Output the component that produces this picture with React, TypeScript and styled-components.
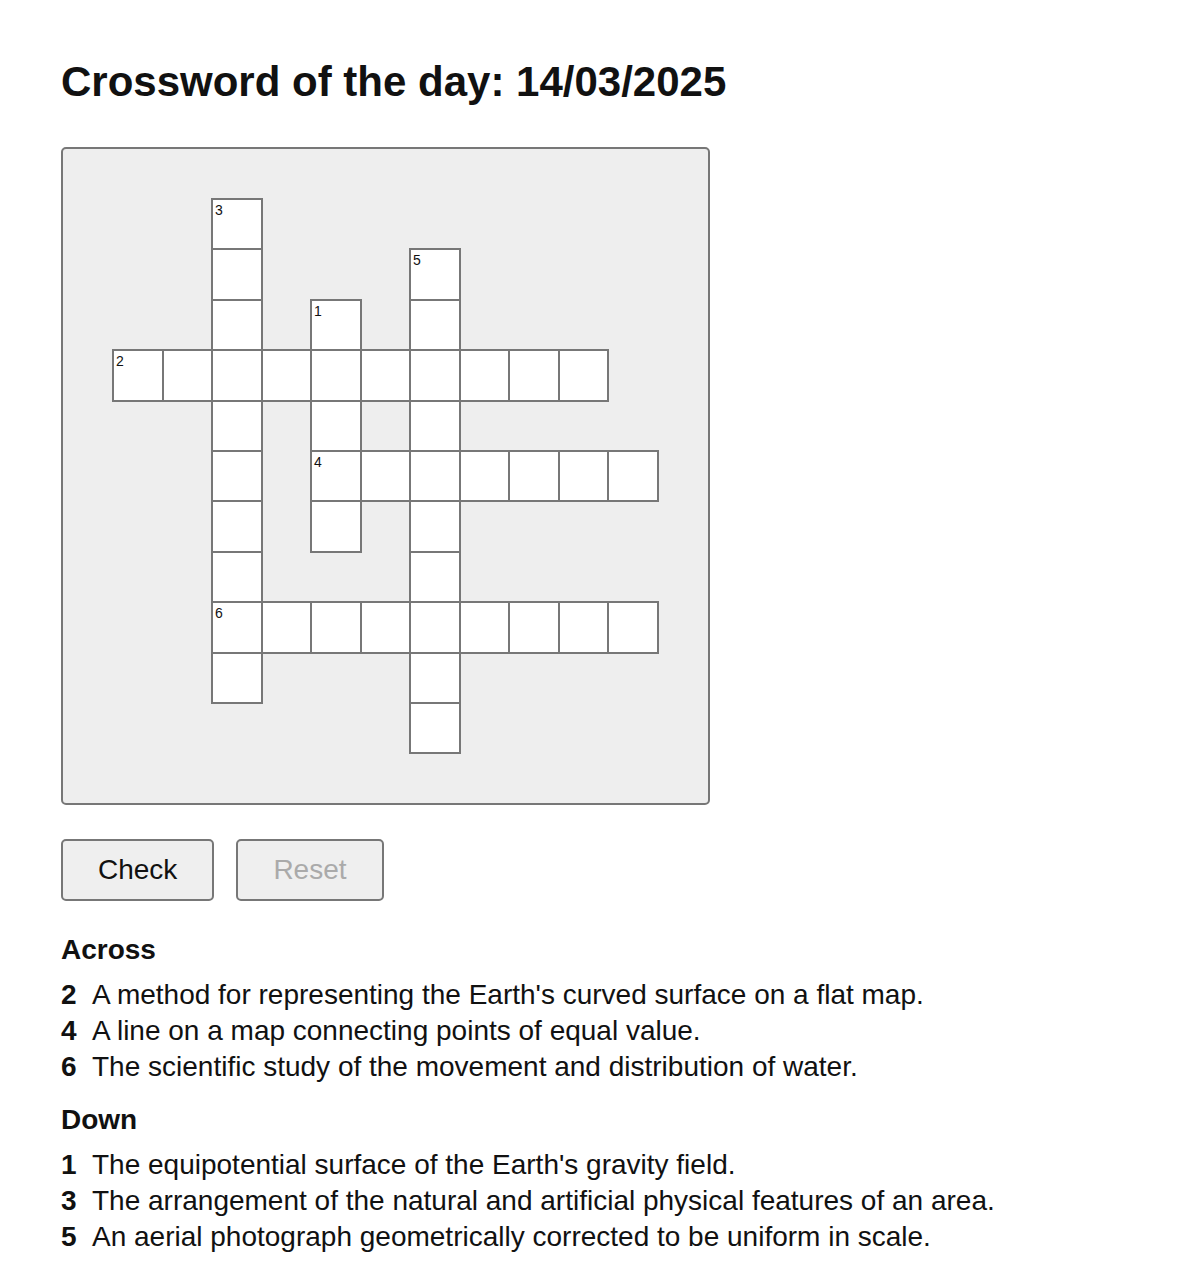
import React, { useState } from "react";
import styled, { createGlobalStyle } from "styled-components";

const GlobalStyle = createGlobalStyle`
  html, body {
    margin: 0;
    padding: 0;
    background: #ffffff;
  }
  body {
    font-family: "Liberation Sans", Arial, Helvetica, sans-serif;
    color: #111111;
  }
  * {
    box-sizing: border-box;
  }
`;

type Direction = "across" | "down";

interface Entry {
  num: number;
  dir: Direction;
  row: number;
  col: number;
  length: number;
  clue: string;
}

const ENTRIES: Entry[] = [
  { num: 2, dir: "across", row: 3, col: 0, length: 10, clue: "A method for representing the Earth's curved surface on a flat map." },
  { num: 4, dir: "across", row: 5, col: 4, length: 7, clue: "A line on a map connecting points of equal value." },
  { num: 6, dir: "across", row: 8, col: 2, length: 9, clue: "The scientific study of the movement and distribution of water." },
  { num: 1, dir: "down", row: 2, col: 4, length: 5, clue: "The equipotential surface of the Earth's gravity field." },
  { num: 3, dir: "down", row: 0, col: 2, length: 10, clue: "The arrangement of the natural and artificial physical features of an area." },
  { num: 5, dir: "down", row: 1, col: 6, length: 10, clue: "An aerial photograph geometrically corrected to be uniform in scale." },
];

const SIZE = 11;

interface CellInfo {
  row: number;
  col: number;
  num?: number;
}

function buildCells(): CellInfo[] {
  const map = new Map<string, CellInfo>();
  for (const e of ENTRIES) {
    for (let i = 0; i < e.length; i++) {
      const row = e.dir === "down" ? e.row + i : e.row;
      const col = e.dir === "across" ? e.col + i : e.col;
      const key = `${row}-${col}`;
      if (!map.has(key)) map.set(key, { row, col });
    }
    const start = map.get(`${e.row}-${e.col}`)!;
    start.num = e.num;
  }
  return Array.from(map.values()).sort((a, b) => a.row - b.row || a.col - b.col);
}

const CELLS = buildCells();

const Page = styled.main`
  display: flex;
  flex-direction: column;
  align-items: flex-start;
  padding: 57px 0 24px 61px;
`;

const Title = styled.h1`
  margin: 0;
  font-size: 42px;
  line-height: 50px;
  font-weight: 700;
  color: #111111;
`;

const Board = styled.div`
  margin-top: 40px;
  padding: 50px;
  background: #eeeeee;
  border: 2px solid #777777;
  border-radius: 5px;
`;

const Grid = styled.div`
  display: grid;
  grid-template-columns: repeat(${SIZE}, 49.5px);
  grid-template-rows: repeat(${SIZE}, 50.4px);
`;

const Cell = styled.div<{ $row: number; $col: number }>`
  grid-row: ${(p) => p.$row + 1};
  grid-column: ${(p) => p.$col + 1};
  position: relative;
  background: #ffffff;
  border: 1px solid #777777;
  outline: 1px solid #777777;
`;

const CellNumber = styled.span`
  position: absolute;
  top: 3px;
  left: 2px;
  font-size: 14px;
  line-height: 14px;
  color: #111111;
  pointer-events: none;
`;

const CellInput = styled.input`
  width: 100%;
  height: 100%;
  border: none;
  background: transparent;
  padding: 0;
  text-align: center;
  text-transform: uppercase;
  font-family: inherit;
  font-size: 24px;
  color: #111111;
  outline: none;
`;

const Actions = styled.div`
  display: flex;
  gap: 22px;
  margin-top: 34px;
`;

const Button = styled.button`
  height: 62px;
  padding: 0 35px;
  font-family: inherit;
  font-size: 28px;
  color: #111111;
  background: #efefef;
  border: 2px solid #777777;
  border-radius: 5px;
  cursor: pointer;

  &:disabled {
    color: #aaaaaa;
    cursor: default;
  }
`;

const Clues = styled.section`
  display: flex;
  flex-direction: column;
  gap: 17px;
  margin-top: 31px;
`;

const ClueGroup = styled.div`
  display: flex;
  flex-direction: column;
  gap: 9px;
`;

const ClueHeading = styled.h2`
  margin: 0;
  font-size: 28px;
  line-height: 36px;
  font-weight: 700;
`;

const ClueList = styled.ol`
  margin: 0;
  padding: 0;
  list-style: none;
`;

const ClueItem = styled.li`
  display: grid;
  grid-template-columns: 31px 1fr;
  font-size: 28px;
  line-height: 36px;
`;

const ClueNumber = styled.span`
  font-weight: 700;
`;

export default function App() {
  const [values, setValues] = useState<Record<string, string>>({});
  const hasInput = Object.values(values).some((v) => v);

  const across = ENTRIES.filter((e) => e.dir === "across").sort((a, b) => a.num - b.num);
  const down = ENTRIES.filter((e) => e.dir === "down").sort((a, b) => a.num - b.num);

  return (
    <>
      <GlobalStyle />
      <Page>
        <Title>Crossword of the day: 14/03/2025</Title>
        <Board>
          <Grid>
            {CELLS.map((c) => {
              const key = `${c.row}-${c.col}`;
              return (
                <Cell key={key} $row={c.row} $col={c.col}>
                  {c.num !== undefined && <CellNumber>{c.num}</CellNumber>}
                  <CellInput
                    maxLength={1}
                    value={values[key] ?? ""}
                    onChange={(ev) => setValues((prev) => ({ ...prev, [key]: ev.target.value }))}
                    aria-label={`Row ${c.row + 1}, column ${c.col + 1}`}
                  />
                </Cell>
              );
            })}
          </Grid>
        </Board>
        <Actions>
          <Button type="button">Check</Button>
          <Button type="button" disabled={!hasInput} onClick={() => setValues({})}>
            Reset
          </Button>
        </Actions>
        <Clues>
          <ClueGroup>
            <ClueHeading>Across</ClueHeading>
            <ClueList>
              {across.map((e) => (
                <ClueItem key={e.num}>
                  <ClueNumber>{e.num}</ClueNumber>
                  <span>{e.clue}</span>
                </ClueItem>
              ))}
            </ClueList>
          </ClueGroup>
          <ClueGroup>
            <ClueHeading>Down</ClueHeading>
            <ClueList>
              {down.map((e) => (
                <ClueItem key={e.num}>
                  <ClueNumber>{e.num}</ClueNumber>
                  <span>{e.clue}</span>
                </ClueItem>
              ))}
            </ClueList>
          </ClueGroup>
        </Clues>
      </Page>
    </>
  );
}
